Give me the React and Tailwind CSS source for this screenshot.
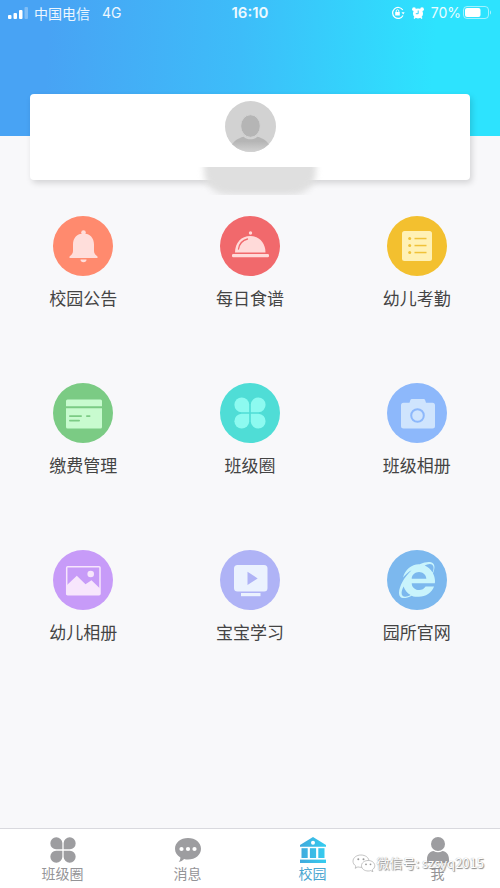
import { FaInternetExplorer } from 'react-icons/fa';

const BellIcon = () => (
  <svg viewBox="0 0 60 60" className="size-full" fill="#ffdedb">
    <circle cx="30.5" cy="16.5" r="2.3" />
    <path d="M20 28.5c0-6.5 4-11 10.5-11S41 22 41 28.5V35c0 2.5 1.5 4 3.5 5.5V42h-28v-1.5C18.5 39 20 37.5 20 35z" />
    <path d="M27.5 43.5h6c0 1.8-1.2 2.800-3 2.800s-3-1-3-2.800z" />
  </svg>
);

const MealIcon = () => (
  <svg viewBox="0 0 60 60" className="size-full" fill="#ffdad9">
    <circle cx="30.5" cy="17" r="1.7" />
    <path d="M15 36.5C15 26.5 21.5 20 30.2 20s15.3 6.5 15.3 16.5z" />
    <rect x="12" y="38" width="37" height="3.2" rx="1.2" />
    <path d="M18.5 33c.8-5 4-8.7 9-10" fill="none" stroke="#f1696c" strokeWidth="1.3" strokeLinecap="round" />
  </svg>
);

const ListIcon = () => (
  <svg viewBox="0 0 60 60" className="size-full">
    <rect x="15" y="15" width="30" height="30" rx="2.5" fill="#fff1b5" />
    <g fill="#f0c238">
      <circle cx="22.7" cy="22.5" r="1.5" />
      <circle cx="22.7" cy="29.5" r="1.5" />
      <circle cx="22.7" cy="36.5" r="1.5" />
      <rect x="27.5" y="21.8" width="12" height="1.5" />
      <rect x="27.5" y="28.8" width="12" height="1.5" />
      <rect x="27.5" y="35.8" width="12" height="1.5" />
    </g>
  </svg>
);

const CardIcon = () => (
  <svg viewBox="0 0 60 60" className="size-full" fill="#c8fbcf">
    <path d="M14.5 16.5h33A1.5 1.5 0 0 1 49 18v5.2H13V18a1.5 1.5 0 0 1 1.5-1.5z" />
    <path d="M13 25.2h36V44a1.5 1.5 0 0 1-1.5 1.5h-33A1.5 1.5 0 0 1 13 44z" />
    <g fill="#7bcb84">
      <rect x="16" y="32.2" width="13" height="1.8" rx=".9" />
      <rect x="33" y="32.2" width="4.5" height="1.8" rx=".9" />
      <rect x="16" y="36.7" width="11" height="1.8" rx=".9" />
    </g>
  </svg>
);

const Clover = ({ className }) => (
  <svg viewBox="0 0 32 32" className={className} fill="currentColor">
    <path d="M15.2 15.2H7.5a7.4 7.4 0 1 1 7.700-7.700z" />
    <path d="M16.8 15.2h7.7a7.4 7.4 0 1 0-7.700-7.700z" />
    <path d="M15.2 16.8H7.5a7.4 7.4 0 1 0 7.700 7.700z" />
    <path d="M16.8 16.8h7.7a7.4 7.4 0 1 1-7.700 7.700z" />
  </svg>
);

const CameraIcon = () => (
  <svg viewBox="0 0 60 60" className="size-full">
    <path
      d="M22.5 19.8l.8-2.6c.3-.8.8-1.2 1.600-1.200h11.7c.8 0 1.3.4 1.6 1.2l.8 2.600h6.5a2.5 2.5 0 0 1 2.5 2.500V43a2.5 2.5 0 0 1-2.500 2.500h-29A2.5 2.5 0 0 1 14 43V22.3a2.5 2.5 0 0 1 2.500-2.500z"
      fill="#cfe4fd"
    />
    <circle cx="30.5" cy="32.5" r="6.3" fill="none" stroke="#8db8fb" strokeWidth="2" />
  </svg>
);

const PictureIcon = () => (
  <svg viewBox="0 0 60 60" className="size-full">
    <rect x="13.7" y="16.7" width="33.3" height="28" rx="1" fill="none" stroke="#f7e6fc" strokeWidth="1.5" />
    <path d="M13.5 35.5l10.3-9.8 8.7 8.6 6-4 8.5 8.2V45H13.5z" fill="#f7e6fc" />
    <circle cx="37.7" cy="24" r="3.3" fill="#f7e6fc" />
  </svg>
);

const VideoIcon = () => (
  <svg viewBox="0 0 60 60" className="size-full" fill="#ebf2fe">
    <rect x="14" y="15" width="33.5" height="26.5" rx="3.5" />
    <rect x="21" y="43" width="19.5" height="3.2" />
    <path d="M27.5 21.8v13.2l10.2-6.6z" fill="#afb3f6" />
  </svg>
);

const menus = [
  { label: '校园公告', color: 'bg-[#ff8a6e]', icon: <BellIcon /> },
  { label: '每日食谱', color: 'bg-[#f1696c]', icon: <MealIcon /> },
  { label: '幼儿考勤', color: 'bg-[#f3c02f]', icon: <ListIcon /> },
  { label: '缴费管理', color: 'bg-[#7bcb84]', icon: <CardIcon /> },
  { label: '班级圈', color: 'bg-[#4fddd6]', icon: <Clover className="size-8 text-[#8dfaf0]" /> },
  { label: '班级相册', color: 'bg-[#8db8fb]', icon: <CameraIcon /> },
  { label: '幼儿相册', color: 'bg-[#c79bf8]', icon: <PictureIcon /> },
  { label: '宝宝学习', color: 'bg-[#afb3f6]', icon: <VideoIcon /> },
  { label: '园所官网', color: 'bg-[#7cb8ee]', icon: <FaInternetExplorer className="size-9 text-[#c9f4fc]" /> },
];

const ChatIcon = () => (
  <svg viewBox="0 0 28 24" className="h-6 w-7" fill="#9d9da0">
    <path d="M14 0c7.400 0 13 4.700 13 10.800s-5.600 10.800-13 10.800c-1.400 0-2.700-.1-3.900-.5C8.700 22.7 7 23.7 4.7 24c1.1-1.4 1.700-2.700 1.700-4.500C3 17.6 1 14.5 1 10.800 1 4.700 6.600 0 14 0z" />
    <g fill="#fff">
      <circle cx="7.5" cy="11" r="2.1" />
      <circle cx="14" cy="11" r="2.1" />
      <circle cx="20.5" cy="11" r="2.1" />
    </g>
  </svg>
);

const SchoolIcon = () => (
  <svg viewBox="0 0 26 26" className="size-[26px]">
    <defs>
      <linearGradient id="school" gradientUnits="userSpaceOnUse" x1="0" y1="0" x2="26" y2="0">
        <stop offset="0" stopColor="#41a9dc" />
        <stop offset="1" stopColor="#35cdf0" />
      </linearGradient>
    </defs>
    <g fill="url(#school)">
      <path fillRule="evenodd" d="M13 0l13 8v1.8H0V8zM13 3.8a2 2 0 1 0 0 4 2 2 0 0 0 0-4z" />
      <rect x="1.5" y="11.2" width="6.2" height="9.8" />
      <rect x="9.9" y="11.2" width="6.2" height="9.8" />
      <rect x="18.3" y="11.2" width="6.2" height="9.8" />
      <rect x="0" y="22.6" width="26" height="3.4" />
    </g>
  </svg>
);

const PersonIcon = () => (
  <svg viewBox="0 0 24 26" className="h-[26px] w-6" fill="#9d9da0">
    <circle cx="12" cy="7" r="7" />
    <path d="M1 26v-3.500C1 17 4 14.500 7.500 14c2.700 1.700 6.300 1.700 9 0 3.500.5 6.500 3 6.500 8.500V26z" />
  </svg>
);

const tabs = [
  { label: '班级圈', icon: <Clover className="size-[26px] text-[#9d9da0]" /> },
  { label: '消息', icon: <ChatIcon /> },
  { label: '校园', icon: <SchoolIcon />, active: true },
  { label: '我', icon: <PersonIcon /> },
];

const StatusBar = () => (
  <div className="grid h-[25px] grid-cols-[1fr_auto_1fr] items-center px-2 text-sm leading-5 text-white/90">
    <div className="flex items-center">
      <svg viewBox="0 0 20 12" className="h-3 w-5" fill="#fff">
        <rect x="0" y="8" width="3.5" height="4" rx="1" />
        <rect x="5.5" y="6" width="3.5" height="6" rx="1" />
        <rect x="11" y="3" width="3.5" height="9" rx="1" />
        <rect x="16.5" y="0" width="3.5" height="12" rx="1" opacity=".3" />
      </svg>
      <span className="ml-1.5">中国电信</span>
      <span className="ml-3 font-[Inter]">4G</span>
    </div>
    <span className="font-[Inter] text-[15px] font-semibold">16:10</span>
    <div className="flex items-center justify-end">
      <svg viewBox="0 0 14 14" className="size-3.5" fill="none" stroke="#fff" strokeWidth="1.2">
        <path d="M11.8 4A5.500 5.500 0 1 0 12 9.500" />
        <path d="M10.5 6.200h3.200L12.200 8.500z" fill="#fff" stroke="none" />
        <rect x="4.2" y="6" width="4.6" height="3.5" fill="#fff" stroke="none" />
        <path d="M5.2 6.200V5a1.3 1.3 0 0 1 2.600 0v1.200" strokeWidth=".9" />
      </svg>
      <svg viewBox="0 0 14 14" className="ml-1.5 size-3.5">
        <circle cx="3" cy="3.2" r="1.9" fill="#fff" />
        <circle cx="11" cy="3.2" r="1.9" fill="#fff" />
        <circle cx="7" cy="7.5" r="5" fill="#fff" />
        <path d="M3 12.500l1.500-1.500M11 12.500L9.500 11" stroke="#fff" strokeWidth="1.5" />
        <path d="M7.2 4.500v3.200H4.800" fill="none" stroke="#2fd4fd" strokeWidth="1" />
      </svg>
      <span className="ml-1.5 font-[Inter]">70%</span>
      <svg viewBox="0 0 29 13" className="ml-0.5 h-[13px] w-[29px]">
        <rect x=".5" y=".5" width="25" height="12" rx="3.5" fill="none" stroke="#fff" strokeOpacity=".55" />
        <rect x="2" y="2" width="15.5" height="9" rx="2" fill="#fff" />
        <path d="M27 4.500c1.300.4 1.300 3.600 0 4z" fill="#fff" fillOpacity=".6" />
      </svg>
    </div>
  </div>
);

const Watermark = () => (
  <div className="pointer-events-none absolute right-4 top-6 flex items-center text-[13px] leading-5 text-white [text-shadow:1px_1px_1px_#888,0_0_1px_#999]">
    <svg viewBox="0 0 24 18" className="h-[18px] w-6" fill="#fff" stroke="#aaa" strokeWidth=".7">
      <path d="M9 1C4.500 1 1 3.700 1 7.200c0 2 1.100 3.700 2.900 4.900L3.200 14.300l2.700-1.400c1 .3 2 .4 3.100.4 4.500 0 8-2.700 8-6.100S13.500 1 9 1z" />
      <path d="M16.2 6.500c-3.800 0-6.700 2.300-6.700 5.300s2.900 5.200 6.700 5.200c.9 0 1.800-.1 2.500-.4l2.200 1.100-.6-1.900c1.500-1 2.500-2.400 2.500-4 0-3-2.900-5.300-6.600-5.300z" />
      <g fill="#999" stroke="none">
        <circle cx="6.3" cy="5.2" r="1" />
        <circle cx="11.5" cy="5.2" r="1" />
        <circle cx="14" cy="10.3" r=".9" />
        <circle cx="18.5" cy="10.3" r=".9" />
      </g>
    </svg>
    <span>微信号: szsyq2015</span>
  </div>
);

export default function App() {
  return (
    <div className="flex min-h-screen flex-col bg-[#f8f8fa] font-['Noto_Sans_CJK_SC',sans-serif]">
      <header className="h-[136px] bg-[linear-gradient(94deg,#48a3f4_10%,#3dbdf9_48%,#2de3fe_86%)]">
        <StatusBar />
      </header>

      {/* Profile card */}
      <section className="relative mx-[30px] -mt-[42px] flex h-[86px] justify-center rounded bg-white pt-[7px] shadow-[2px_3px_6px_rgba(0,0,0,0.15)]">
        <svg viewBox="0 0 52 52" className="size-[51px]">
          <defs>
            <clipPath id="avatar">
              <circle cx="26" cy="26" r="26" />
            </clipPath>
            <linearGradient id="body" x1="0" y1="0" x2="0" y2="1">
              <stop offset=".3" stopColor="#b5b5b5" />
              <stop offset="1" stopColor="#d3d3d3" />
            </linearGradient>
          </defs>
          <g clipPath="url(#avatar)">
            <rect width="52" height="52" fill="#d2d2d2" />
            <path d="M6 46c3-5 7-8 13-9.500 4 3.500 10 3.500 14 0C39 38 43 41 46 46l-6 6H12z" fill="url(#body)" />
            <ellipse cx="26" cy="25.5" rx="10" ry="11.5" fill="#b5b5b5" stroke="#d2d2d2" />
          </g>
        </svg>
        <div className="absolute inset-x-0 top-[73px] flex h-7 justify-center overflow-hidden pl-5">
          <div className="-mt-4 h-11 w-28 rounded-b-3xl bg-[#dfdfdf] blur-[3px]" />
        </div>
      </section>

      <main className="grid flex-1 grid-cols-3 content-start">
        {menus.map((m) => (
          <button key={m.label} className="flex aspect-square flex-col items-center justify-center gap-2.5">
            <span className={`flex size-[60px] items-center justify-center rounded-full ${m.color}`}>{m.icon}</span>
            <span className="text-[17px] leading-6 text-[#444]">{m.label}</span>
          </button>
        ))}
      </main>

      <nav className="relative grid h-[60px] grid-cols-4 border-t border-[#d9d9de] bg-white">
        {tabs.map((t) => (
          <a
            key={t.label}
            href="#"
            className={`flex flex-col items-center pt-2 text-sm leading-5 ${t.active ? 'text-[#4ba6d0]' : 'text-[#949497]'}`}
          >
            <span className="flex h-[26px] items-center">{t.icon}</span>
            {t.label}
          </a>
        ))}
        <Watermark />
      </nav>
    </div>
  );
}
